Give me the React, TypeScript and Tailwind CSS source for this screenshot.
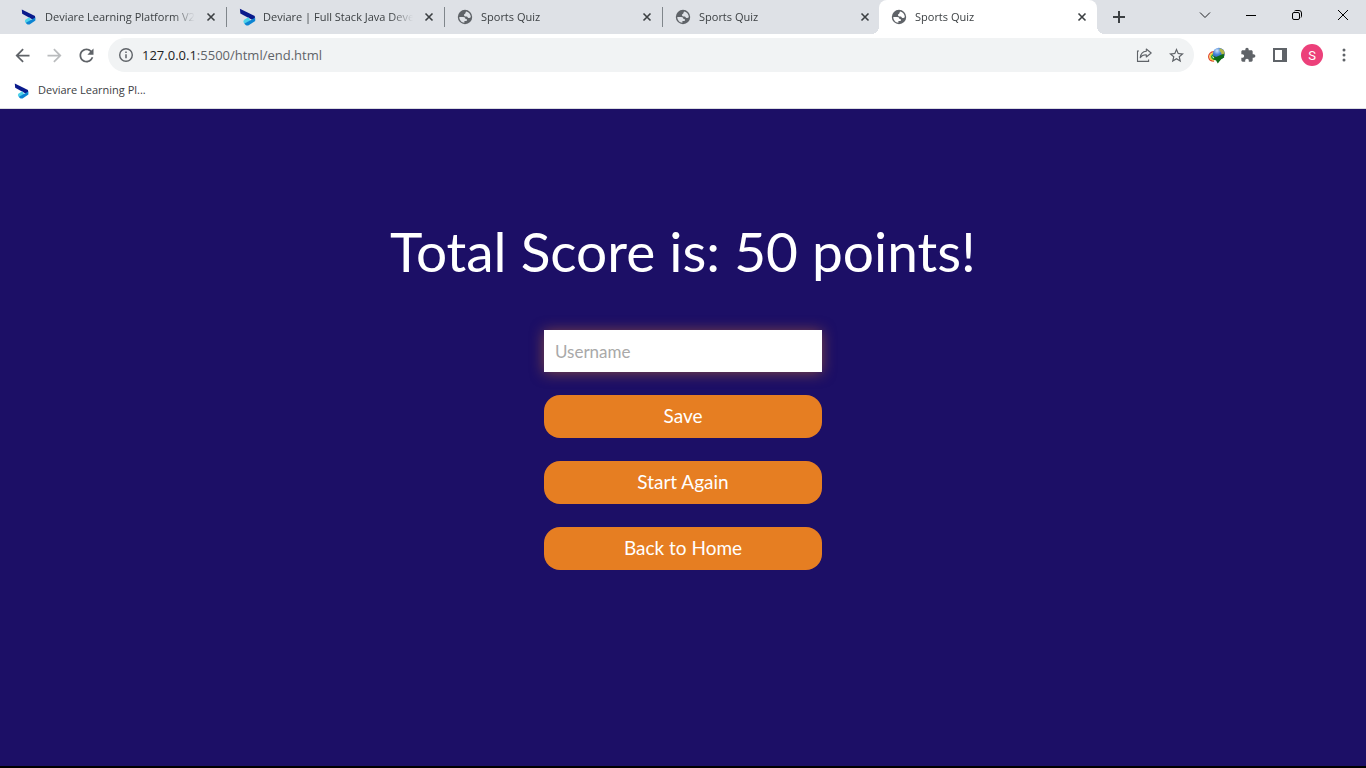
import { useState } from "react";
import type { ReactNode } from "react";

function DeviareLogo({ large = false }: { large?: boolean }) {
  return (
    <svg viewBox="0 0 16 16" className={large ? "h-[18px] w-[18px] shrink-0" : "h-4 w-4 shrink-0"} aria-hidden="true">
      <path d="M0.800 0.600 14 7 14.200 9.200 11.600 10.400 1.200 4.800Z" fill="#0a1a8c" />
      <path d="M4.600 10.400 8.400 8.200 10.200 11.400 5 14C3.600 13 3.600 11.300 4.600 10.400Z" fill="#4fd3ea" />
      <path d="M4.800 13.800 14.400 8.600V11.600L8.600 15.400C7 16 5.400 15.200 4.800 13.800Z" fill="#0c84d2" />
    </svg>
  );
}

function GlobeIcon() {
  return (
    <svg viewBox="0 0 16 16" className="h-4 w-4 shrink-0" aria-hidden="true">
      <path
        fill="#5f6368"
        fillRule="evenodd"
        d="M8 .8a7.200 7.200 0 1 0 0 14.400A7.200 7.200 0 0 0 8 .8ZM2.300 7.900h3.900c1.500 0 2.300.8 2.200 2.100h1.400v1.900H7.400v1.800C4.500 13.400 2.300 11 2.300 7.900ZM9.300 2.400c2.600.6 4.500 2.900 4.500 5.600-.4.900-1.300 1.300-2.300 1-1-.3-.7-1.500-1.900-1.600-1.500-.1-2.600-.3-2.600-1.500 0-1.100 1.400-.8 1.500-1.900.1-.6.100-1.200.8-1.600Z"
      />
    </svg>
  );
}

function CloseGlyph() {
  return (
    <svg viewBox="0 0 10 10" className="h-[10px] w-[10px]" aria-hidden="true">
      <path d="M1.500 1.500 8.500 8.500M8.500 1.500 1.500 8.500" stroke="#3c4043" strokeWidth="1.600" fill="none" />
    </svg>
  );
}

type TabItem = { title: string; icon: ReactNode };

const tabs: TabItem[] = [
  { title: "Deviare Learning Platform V2", icon: <DeviareLogo /> },
  { title: "Deviare | Full Stack Java Developer", icon: <DeviareLogo large /> },
  { title: "Sports Quiz", icon: <GlobeIcon /> },
  { title: "Sports Quiz", icon: <GlobeIcon /> },
  { title: "Sports Quiz", icon: <GlobeIcon /> },
];

function Tab({ tab, active, divider }: { tab: TabItem; active: boolean; divider: boolean }) {
  return (
    <div
      className={
        active
          ? "relative -ml-px flex min-w-0 flex-[0_1_218px] rounded-t-lg bg-white"
          : "flex min-w-0 flex-[0_1_218px]"
      }
    >
      {active ? (
        <>
          <span className="absolute bottom-0 -left-2 h-2 w-2 bg-[radial-gradient(circle_at_0_0,transparent_8px,#fff_8px)]" />
          <span className="absolute -right-2 bottom-0 h-2 w-2 bg-[radial-gradient(circle_at_100%_0,transparent_8px,#fff_8px)]" />
        </>
      ) : (
        <span className={divider ? "my-[7px] w-px bg-[#80868b]" : "my-[7px] w-px"} />
      )}
      <div className="flex min-w-0 flex-1 items-center pr-[7px] pl-3">
        <span className="flex w-6 shrink-0">{tab.icon}</span>
        <span className="min-w-0 flex-1 overflow-hidden whitespace-nowrap [mask-image:linear-gradient(to_right,#000_calc(100%-22px),transparent)]">
          {tab.title}
        </span>
        <button type="button" aria-label={"Close " + tab.title} className="ml-2 flex h-4 w-4 shrink-0 items-center justify-center">
          <CloseGlyph />
        </button>
      </div>
    </div>
  );
}

function TabStrip() {
  const active = 4;
  return (
    <div className="flex h-[34px] bg-[#dee1e6] pl-2 text-[11px]">
      {tabs.map((tab, i) => (
        <Tab key={i} tab={tab} active={i === active} divider={i > 0} />
      ))}
      <button type="button" aria-label="New tab" className="ml-3 flex w-5 shrink-0 items-center justify-center">
        <svg viewBox="0 0 14 14" className="h-[14px] w-[14px]" aria-hidden="true">
          <path d="M7 1v12M1 7h12" stroke="#3c4043" strokeWidth="2" />
        </svg>
      </button>
      <div className="ml-auto flex shrink-0 pb-[5px]">
        <button type="button" aria-label="Search tabs" className="flex w-[46px] items-center justify-center">
          <svg viewBox="0 0 12 12" className="h-3 w-3" aria-hidden="true">
            <path d="m1 3.500 5 5 5-5" stroke="#202124" fill="none" />
          </svg>
        </button>
        <button type="button" aria-label="Minimize" className="flex w-[46px] items-center justify-center">
          <svg viewBox="0 0 10 10" className="h-[10px] w-[10px]" aria-hidden="true">
            <path d="M0 5.500h10" stroke="#000" />
          </svg>
        </button>
        <button type="button" aria-label="Restore" className="flex w-[46px] items-center justify-center">
          <svg viewBox="0 0 10 10" className="h-[10px] w-[10px]" fill="none" stroke="#000" aria-hidden="true">
            <rect x="0.500" y="2.500" width="7" height="7" rx="1.500" />
            <path d="M2.500 1C2.800.700 3.200.500 3.700.500h3.300A2.500 2.500 0 0 1 9.500 3v3.300c0 .500-.200.900-.500 1.200" />
          </svg>
        </button>
        <button type="button" aria-label="Close window" className="flex w-[46px] items-center justify-center">
          <svg viewBox="0 0 12 12" className="h-3 w-3" aria-hidden="true">
            <path d="m1 1 10 10M11 1 1 11" stroke="#000" />
          </svg>
        </button>
      </div>
    </div>
  );
}

function NavButton({ label, path, color }: { label: string; path: string; color: string }) {
  return (
    <button type="button" aria-label={label} className="flex h-8 w-8 shrink-0 items-center justify-center">
      <svg viewBox="0 0 24 24" className="h-[21px] w-[21px]" fill={color} aria-hidden="true">
        <path d={path} />
      </svg>
    </button>
  );
}

function DownloadManagerIcon() {
  return (
    <svg viewBox="0 0 16 16" className="h-[17px] w-[17px]" aria-hidden="true">
      <defs>
        <radialGradient id="globe" cx="0.350" cy="0.250" r="0.800">
          <stop offset="0" stopColor="#cfe4ff" />
          <stop offset="0.400" stopColor="#4a86d8" />
          <stop offset="1" stopColor="#1b3f8c" />
        </radialGradient>
      </defs>
      <path d="M6 4.500C2.500 4.200.300 7 .700 9.700c.300 2.200 2.500 3.500 5 3.500" fill="none" stroke="#e2462a" strokeWidth="1.200" />
      <path d="M6 5.800C3.500 5.800 1.900 7.600 2.100 9.500c.200 1.600 1.800 2.600 4 2.600" fill="none" stroke="#f6d02c" strokeWidth="1.400" />
      <path d="M6 7.200c-1.700.200-2.700 1.200-2.500 2.300.200 1.200 1.500 1.900 3.500 1.600" fill="none" stroke="#2fa32f" strokeWidth="1.500" />
      <circle cx="10.200" cy="6.300" r="5.600" fill="url(#globe)" />
      <path d="M11.200 1.200c2.500.500 4.400 2.500 4.500 4.900-.6 1.500-1.700 1.700-2.600 1-.8-.7-.4-1.800-1.300-2.400-.9-.7-1.300-2.400-.6-3.500Z" fill="#b4b84a" />
      <path d="M4.300 8 7.600 9.400 14.800 6.400 15.200 9.800 12.600 11.200 9.200 15.600 7.600 12.600 4.600 11.600 6.300 10.600Z" fill="#0f6b16" />
    </svg>
  );
}

function Toolbar() {
  return (
    <div className="flex items-center bg-white px-[6px] py-1">
      <NavButton label="Back" color="#5f6368" path="M20 11H7.830l5.590-5.590L12 4l-8 8 8 8 1.410-1.410L7.830 13H20v-2z" />
      <NavButton label="Forward" color="#babcbe" path="M12 4l-1.410 1.410L16.170 11H4v2h12.170l-5.580 5.590L12 20l8-8z" />
      <NavButton
        label="Reload"
        color="#5f6368"
        path="M17.650 6.350C16.200 4.900 14.210 4 12 4c-4.420 0-7.990 3.580-7.990 8s3.570 8 7.990 8c3.730 0 6.840-2.550 7.730-6h-2.080c-.820 2.330-3.040 4-5.650 4-3.310 0-6-2.690-6-6s2.690-6 6-6c1.660 0 3.140.690 4.220 1.780L13 11h7V4l-2.350 2.350z"
      />
      <div className="ml-[6px] flex h-[34px] min-w-0 flex-1 items-center rounded-full bg-[#f1f3f4] px-[10px]">
        <svg viewBox="0 0 16 16" className="h-4 w-4 shrink-0" aria-hidden="true">
          <circle cx="8" cy="8" r="6.300" fill="none" stroke="#5f6368" strokeWidth="1.400" />
          <path d="M8 7.200v4M8 4.500V6" stroke="#5f6368" strokeWidth="1.500" />
        </svg>
        <span className="ml-2 min-w-0 flex-1 truncate pt-px text-[13px] text-[#5f6368]">
          <span className="text-[#202124]">127.0.0.1</span>:5500/html/end.html
        </span>
        <button type="button" aria-label="Share this page" className="flex h-4 w-4 shrink-0 items-center justify-center">
          <svg viewBox="0 0 16 16" className="h-4 w-4" fill="none" stroke="#5f6368" strokeWidth="1.100" aria-hidden="true">
            <path d="M3 4H1.500v10.400h11.100v-2" />
            <path d="M10.300 2 15.200 6 10.300 10V7.700C7.400 7.600 5.500 8.600 4.200 10.700 4.600 7 6.800 4.600 10.300 4.300Z" strokeLinejoin="round" />
          </svg>
        </button>
        <button type="button" aria-label="Bookmark this page" className="ml-4 flex h-4 w-4 shrink-0 items-center justify-center">
          <svg viewBox="2 2 20 20" className="h-[15px] w-[15px]" fill="#5f6368" aria-hidden="true">
            <path d="M22 9.240l-7.190-.620L12 2 9.190 8.630 2 9.240l5.460 4.730L5.820 21 12 17.270 18.180 21l-1.630-7.030L22 9.240zM12 15.400l-3.760 2.270 1-4.280-3.320-2.880 4.380-.380L12 6.100l1.710 4.040 4.380.380-3.320 2.880 1 4.280L12 15.400z" />
          </svg>
        </button>
      </div>
      <div className="ml-[6px] flex shrink-0 items-center">
        <button type="button" aria-label="Download manager" className="flex h-8 w-8 items-center justify-center">
          <DownloadManagerIcon />
        </button>
        <button type="button" aria-label="Extensions" className="flex h-8 w-8 items-center justify-center">
          <svg viewBox="0 0 24 24" className="h-4 w-4" fill="#5f6368" aria-hidden="true">
            <path d="M20.500 11H19V7c0-1.100-.900-2-2-2h-4V3.500C13 2.120 11.880 1 10.500 1S8 2.120 8 3.500V5H4c-1.100 0-1.990.900-1.990 2v3.800H3.500c1.490 0 2.700 1.210 2.700 2.700s-1.210 2.700-2.700 2.700H2V20c0 1.100.900 2 2 2h3.800v-1.500c0-1.490 1.210-2.700 2.700-2.700 1.490 0 2.700 1.210 2.700 2.700V22H17c1.100 0 2-.900 2-2v-4h1.500c1.380 0 2.500-1.120 2.500-2.500S21.880 11 20.500 11z" />
          </svg>
        </button>
        <button type="button" aria-label="Side panel" className="flex h-8 w-8 items-center justify-center">
          <svg viewBox="0 0 14 14" className="h-[14px] w-[14px]" aria-hidden="true">
            <path d="M0 0h14v14H0ZM2 2v10h7V2Z" fill="#5f6368" fillRule="evenodd" />
          </svg>
        </button>
        <button type="button" aria-label="Profile" className="flex h-8 w-8 items-center justify-center">
          <span className="flex h-[22px] w-[22px] items-center justify-center rounded-full bg-[#ec407a] font-['Roboto',sans-serif] text-[13px] leading-none text-white">
            S
          </span>
        </button>
        <button type="button" aria-label="Menu" className="flex h-8 w-8 items-center justify-center">
          <svg viewBox="0 0 4 14" className="h-[14px] w-1" fill="#5f6368" aria-hidden="true">
            <circle cx="2" cy="2" r="1.500" />
            <circle cx="2" cy="7" r="1.500" />
            <circle cx="2" cy="12" r="1.500" />
          </svg>
        </button>
      </div>
    </div>
  );
}

const choiceClass =
  "flex h-[43px] w-full items-center justify-center rounded-2xl bg-[#e67e22] text-[19px] text-white";

export default function App() {
  const [username, setUsername] = useState("");
  return (
    <div className="flex min-h-screen flex-col bg-[#1c0f66] font-['Open_Sans','Noto_Sans',sans-serif] text-[#3c4043]">
      <header className="border-b border-[#dadce0] bg-white">
        <TabStrip />
        <Toolbar />
        <nav aria-label="Bookmarks" className="flex h-8 items-center px-[14px] pb-[3px] text-[11px]">
          <a href="#deviare" className="flex items-center gap-2">
            <DeviareLogo />
            Deviare Learning Pl...
          </a>
        </nav>
      </header>
      <main className="flex flex-1 flex-col items-center border-b-2 border-black px-6 pt-[108px] font-['Lato',sans-serif]">
        <h1 className="text-center text-[55px] leading-[68px] text-white">Total Score is: 50 points!</h1>
        <form className="mt-[45px] flex w-full max-w-[278px] flex-col gap-[23px] pb-8" onSubmit={(e) => e.preventDefault()}>
          <input
            type="text"
            aria-label="Username"
            placeholder="Username"
            value={username}
            onChange={(e) => setUsername(e.target.value)}
            className="h-[42px] w-full bg-white px-[11px] text-[17px] text-black shadow-[0_1px_14px_0_rgba(230,126,34,0.5)] outline-none placeholder:text-[#a9a9a9]"
          />
          <button type="submit" className={choiceClass}>
            Save
          </button>
          <a href="#start" className={choiceClass}>
            Start Again
          </a>
          <a href="#home" className={choiceClass}>
            Back to Home
          </a>
        </form>
      </main>
    </div>
  );
}
